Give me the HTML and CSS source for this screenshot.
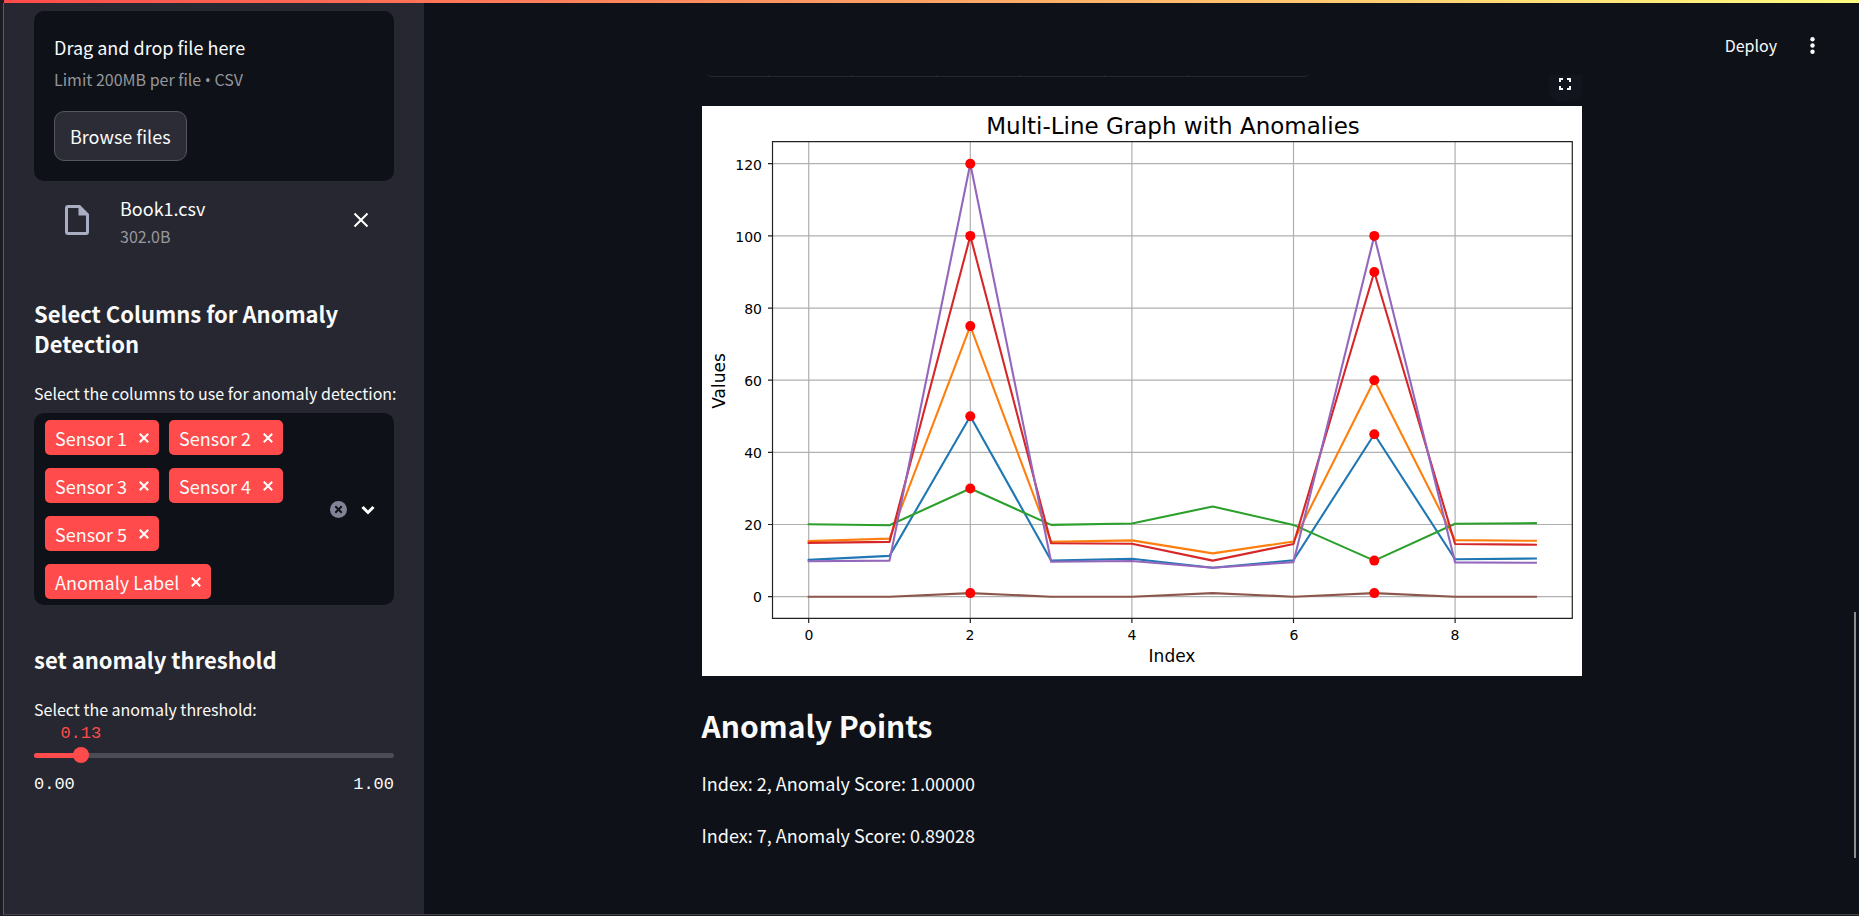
FILE: index.html
```html
<!DOCTYPE html>
<html lang="en">
<head>
<meta charset="utf-8">
<title>Anomaly Detection</title>
<link rel="stylesheet" href="styles.css">
</head>
<body>
<div class="window">
  <div class="decoration"></div>
  <div class="app">
    <aside class="sidebar">
      <section class="dropzone">
        <span class="dropzone-title">Drag and drop file here</span>
        <span class="dropzone-hint">Limit 200MB per file <span class="bullet">•</span> CSV</span>
        <button class="browse" type="button">Browse files</button>
      </section>
      <div class="file">
        <svg class="file-icon" width="24" height="30" viewBox="0 0 24 30" aria-hidden="true"><path fill-rule="evenodd" d="M3 0H15L24 9V27a3 3 0 0 1-3 3H3a3 3 0 0 1-3-3V3a3 3 0 0 1 3-3ZM3 3V27H21V10.500H13.500V3Z"/></svg>
        <div class="file-text">
          <span class="file-name">Book1.csv</span>
          <span class="file-size">302.0B</span>
        </div>
        <button class="icon-button" type="button" aria-label="Remove Book1.csv"><svg width="16" height="16" viewBox="0 0 16 16"><path class="stroke" d="M1.500 1.500 14.500 14.500M14.500 1.500 1.500 14.500"/></svg></button>
      </div>

      <h3 class="side-heading">Select Columns for Anomaly Detection</h3>
      <div class="label" id="columns-label">Select the columns to use for anomaly detection:</div>
      <div class="multiselect" role="group" aria-labelledby="columns-label">
        <div class="tags">
          <span class="tag">Sensor 1<button class="icon-button" type="button" aria-label="Remove Sensor 1"><svg width="10" height="10" viewBox="0 0 10 10"><path class="stroke" d="M.8.8 9.200 9.200M9.200.8.8 9.200"/></svg></button></span>
          <span class="tag">Sensor 2<button class="icon-button" type="button" aria-label="Remove Sensor 2"><svg width="10" height="10" viewBox="0 0 10 10"><path class="stroke" d="M.8.8 9.200 9.200M9.200.8.8 9.200"/></svg></button></span>
          <span class="tag">Sensor 3<button class="icon-button" type="button" aria-label="Remove Sensor 3"><svg width="10" height="10" viewBox="0 0 10 10"><path class="stroke" d="M.8.8 9.200 9.200M9.200.8.8 9.200"/></svg></button></span>
          <span class="tag">Sensor 4<button class="icon-button" type="button" aria-label="Remove Sensor 4"><svg width="10" height="10" viewBox="0 0 10 10"><path class="stroke" d="M.8.8 9.200 9.200M9.200.8.8 9.200"/></svg></button></span>
          <span class="tag">Sensor 5<button class="icon-button" type="button" aria-label="Remove Sensor 5"><svg width="10" height="10" viewBox="0 0 10 10"><path class="stroke" d="M.8.8 9.200 9.200M9.200.8.8 9.200"/></svg></button></span>
          <span class="tag">Anomaly Label<button class="icon-button" type="button" aria-label="Remove Anomaly Label"><svg width="10" height="10" viewBox="0 0 10 10"><path class="stroke" d="M.8.8 9.200 9.200M9.200.8.8 9.200"/></svg></button></span>
        </div>
        <button class="icon-button" type="button" aria-label="Clear all"><svg width="17" height="17" viewBox="0 0 17 17"><circle class="clear-disc" cx="8.500" cy="8.500" r="8.500"/><path class="clear-cross" d="M5.300 5.300 11.700 11.700M11.700 5.300 5.300 11.700"/></svg></button>
        <button class="icon-button" type="button" aria-label="Open options"><svg width="14" height="10" viewBox="0 0 14 10"><path class="chevron" d="M1.500 2 7 7.500 12.500 2"/></svg></button>
      </div>

      <h3 class="side-heading threshold-heading">set anomaly threshold</h3>
      <label class="label" for="threshold">Select the anomaly threshold:</label>
      <div class="slider">
        <output class="slider-value" for="threshold" style="margin-left: 13%">0.13</output>
        <div class="slider-row">
          <div class="rail"><div class="rail-fill" style="width: 13%"></div></div>
          <input class="range" id="threshold" type="range" min="0" max="1" step="0.01" value="0.13">
        </div>
        <div class="slider-ends"><span>0.00</span><span>1.00</span></div>
      </div>
    </aside>

    <div class="page">
      <header class="toolbar">
        <button class="deploy" type="button">Deploy</button>
        <button class="icon-button" type="button" aria-label="Main menu"><svg width="5" height="17" viewBox="0 0 5 17"><g fill="#fafafa"><circle cx="2.500" cy="2.200" r="2.200"/><circle cx="2.500" cy="8.500" r="2.200"/><circle cx="2.500" cy="14.800" r="2.200"/></g></svg></button>
      </header>
      <main class="content">
        <div class="scroll-edge">
          <div class="frame-clip"><div class="frame"><i></i><i></i><i></i><i></i><i></i><i></i><i></i></div></div>
          <button class="fullscreen" type="button" aria-label="View fullscreen"><svg width="12" height="12" viewBox="0 0 12 12"><path d="M1 4V1H4M8 1H11V4M11 8V11H8M4 11H1V8"/></svg></button>
        </div>
        <svg class="chart" viewBox="0 0 880 570" role="img" aria-label="Multi-Line Graph with Anomalies">
          <rect width="880" height="570" fill="#fff"/>
          <path class="grid" d="M106.700 36V512M268.300 36V512M429.900 36V512M591.500 36V512M753.100 36V512M71 490.700H870M71 418.500H870M71 346.400H870M71 274.200H870M71 202.100H870M71 129.900H870M71 57.700H870"/>
          <g class="series">
            <polyline stroke="#1f77b4" points="106.700,453.900 187.500,449.900 268.300,310.300 349.100,454.600 429.900,452.800 510.700,461.800 591.500,454.300 672.300,328.300 753.100,453.200 833.900,452.500"/>
            <polyline stroke="#ff7f0e" points="106.700,435.100 187.500,432.600 268.300,220.100 349.100,435.900 429.900,434.400 510.700,447.400 591.500,435.500 672.300,274.200 753.100,434.100 833.900,434.800"/>
            <polyline stroke="#2ca02c" points="106.700,418.200 187.500,419.300 268.300,382.500 349.100,418.900 429.900,417.500 510.700,400.500 591.500,418.900 672.300,454.600 753.100,417.800 833.900,417.100"/>
            <polyline stroke="#d62728" points="106.700,436.900 187.500,435.900 268.300,129.900 349.100,437.300 429.900,437.700 510.700,454.600 591.500,438 672.300,166 753.100,438 833.900,438.700"/>
            <polyline stroke="#9467bd" points="106.700,455.300 187.500,454.600 268.300,57.700 349.100,455.700 429.900,455 510.700,461.800 591.500,456.100 672.300,129.900 753.100,456.400 833.900,456.800"/>
            <polyline stroke="#8c564b" points="106.700,490.700 187.500,490.700 268.300,487.100 349.100,490.700 429.900,490.700 510.700,487.100 591.500,490.700 672.300,487.100 753.100,490.700 833.900,490.700"/>
          </g>
          <g fill="#f00">
            <circle cx="268.300" cy="57.700" r="5"/><circle cx="268.300" cy="129.900" r="5"/><circle cx="268.300" cy="220.100" r="5"/><circle cx="268.300" cy="310.300" r="5"/><circle cx="268.300" cy="382.500" r="5"/><circle cx="268.300" cy="487.100" r="5"/>
            <circle cx="672.300" cy="129.900" r="5"/><circle cx="672.300" cy="166" r="5"/><circle cx="672.300" cy="274.200" r="5"/><circle cx="672.300" cy="328.300" r="5"/><circle cx="672.300" cy="454.600" r="5"/><circle cx="672.300" cy="487.100" r="5"/>
          </g>
          <path class="axis" d="M70.500 35.700H870.300V512.300H70.500ZM66 490.700H70.500M66 418.500H70.500M66 346.400H70.500M66 274.200H70.500M66 202.100H70.500M66 129.900H70.500M66 57.700H70.500M106.700 512V517M268.300 512V517M429.900 512V517M591.500 512V517M753.100 512V517"/>
          <g class="tick-text" text-anchor="end">
            <text x="60" y="64">120</text><text x="60" y="136">100</text><text x="60" y="208">80</text><text x="60" y="280">60</text><text x="60" y="352">40</text><text x="60" y="424">20</text><text x="60" y="496">0</text>
          </g>
          <g class="tick-text" text-anchor="middle">
            <text x="107" y="534">0</text><text x="268" y="534">2</text><text x="430" y="534">4</text><text x="592" y="534">6</text><text x="753" y="534">8</text>
          </g>
          <text class="axis-title" x="470" y="556">Index</text>
          <text class="axis-title" transform="translate(23 275) rotate(-90)">Values</text>
          <text class="chart-title" x="471" y="28">Multi-Line Graph with Anomalies</text>
        </svg>
        <h1 class="title">Anomaly Points</h1>
        <p class="point">Index: 2, Anomaly Score: 1.00000</p>
        <p class="point">Index: 7, Anomaly Score: 0.89028</p>
      </main>
      <div class="scrollbar"></div>
    </div>
  </div>
</div>
</body>
</html>
```
FILE: styles.css
```css
* { box-sizing: border-box; }

body {
  margin: 0;
  background: #1c1c22;
  color: #fafafa;
  font: 18px/32px "Noto Sans CJK SC", "Open Sans", sans-serif;
}

button {
  font: inherit;
  color: inherit;
  padding: 0;
  border: 0;
  background: none;
}

.window {
  display: flex;
  flex-direction: column;
  min-height: 100vh;
  padding-left: 3px;
  border-bottom: 1px solid #1c1c22;
}

.decoration {
  height: 3px;
  margin-left: 1px;
  background: linear-gradient(90deg, #ff4b4b, #fffd80);
}

.app {
  display: flex;
  flex: 1;
  border-left: 1px solid #5c5c62;
  border-bottom: 1px solid #444448;
}

.sidebar {
  flex: none;
  width: 420px;
  padding: 8px 30px;
  background: #262730;
}

.dropzone {
  display: flex;
  flex-direction: column;
  align-items: flex-start;
  padding: 20px;
  border-radius: 10px;
  background: #0e1117;
}

.dropzone-hint {
  color: #95969a;
  font-size: 16px;
}

.bullet { font-family: "Open Sans", sans-serif; }

.browse {
  height: 50px;
  margin-top: 15px;
  padding: 0 15px;
  border: 1px solid #55565d;
  border-radius: 10px;
  background: #2b2c36;
}

.icon-button {
  display: flex;
  flex: none;
}

.stroke {
  fill: none;
  stroke: #fff;
  stroke-width: 2;
}

.file {
  display: flex;
  align-items: center;
  margin-top: 13px;
  padding: 0 25px 0 31px;
}

.file svg { margin-bottom: 4px; }

.file-icon { fill: #a9aec4; }

.file-text {
  display: flex;
  flex: 1;
  flex-direction: column;
  margin-left: 31px;
  line-height: 28px;
}

.file-size {
  color: #98989d;
  font-size: 16px;
}

.side-heading {
  margin: 48px 0 23px;
  font-size: 22px;
  line-height: 30px;
}

.threshold-heading { margin-top: 39px; }

.label {
  display: block;
  font-size: 16px;
  line-height: 24px;
  white-space: nowrap;
}

.multiselect {
  display: flex;
  align-items: center;
  gap: 14px;
  margin-top: 8px;
  padding: 7px 19px 6px 11px;
  border-radius: 10px;
  background: #0e1117;
}

.tags {
  display: flex;
  flex: 1;
  flex-wrap: wrap;
  gap: 13px 10px;
}

.tag {
  display: flex;
  align-items: center;
  gap: 12px;
  height: 35px;
  padding: 0 10px;
  border-radius: 5px;
  background: #ff4b4b;
}

.clear-disc { fill: #808495; }

.clear-cross {
  stroke: #0e1117;
  stroke-width: 2;
}

.chevron {
  fill: none;
  stroke: #fff;
  stroke-width: 3;
}

.slider {
  font-family: "Liberation Mono", monospace;
  font-size: 17px;
}

.slider-value {
  display: block;
  width: max-content;
  color: #ff4b4b;
  line-height: 26px;
  transform: translateX(-50%);
}

.slider-row {
  display: grid;
  align-items: center;
}

.rail,
.range { grid-area: 1 / 1; }

.rail {
  height: 5px;
  border-radius: 3px;
  background: #4b4c55;
  overflow: hidden;
}

.rail-fill {
  height: 100%;
  background: #ff4b4b;
}

.range {
  height: 16px;
  margin: 0 -8px;
  appearance: none;
  background: none;
}

.range::-webkit-slider-thumb {
  appearance: none;
  width: 16px;
  height: 16px;
  border-radius: 50%;
  background: #ff4b4b;
}

.slider-ends {
  display: flex;
  justify-content: space-between;
  margin-top: 10px;
  line-height: 24px;
}

.page {
  position: relative;
  flex: 1;
  background: #0e1117;
}

.toolbar {
  display: flex;
  align-items: center;
  justify-content: flex-end;
  gap: 33px;
  height: 72px;
  padding: 12px 44px 0 0;
  font-size: 16px;
}

.content {
  max-width: 880px;
  margin: 0 auto;
}

.scroll-edge {
  display: flex;
  align-items: flex-start;
  justify-content: space-between;
  height: 31px;
}

.frame-clip {
  display: flex;
  align-items: flex-end;
  width: 612px;
  height: 2px;
  overflow: hidden;
}

.frame {
  display: grid;
  flex: 1;
  grid-template-columns: 65px repeat(5, 84px) 1fr;
  height: 24px;
  border: 1px solid #26292f;
  border-radius: 10px;
}

.frame i + i { border-left: 1px solid #26292f; }

.fullscreen {
  display: flex;
  justify-content: center;
  width: 33px;
  height: 26px;
  padding-top: 3px;
  border-radius: 0 0 10px 10px;
  background: #12151d;
}

.fullscreen path {
  fill: none;
  stroke: #fafafa;
  stroke-width: 2;
}

.chart {
  display: block;
  width: 100%;
  font-family: "DejaVu Sans", sans-serif;
}

.grid {
  stroke: #b0b0b0;
  stroke-width: 1.2;
}

.series {
  fill: none;
  stroke-width: 2.1;
  stroke-linejoin: round;
  stroke-linecap: square;
}

.axis {
  fill: none;
  stroke: #222;
  stroke-width: 1.2;
}

.tick-text { font-size: 14px; }

.axis-title {
  font-size: 17px;
  text-anchor: middle;
}

.chart-title {
  font-size: 23px;
  text-anchor: middle;
}

.title {
  margin: 25px 0 18px;
  font-size: 30px;
  line-height: 48px;
}

.point { margin: 0 0 20px; }

.scrollbar {
  position: absolute;
  right: 3px;
  bottom: 56px;
  width: 2px;
  height: 27%;
  background: #8f8f8f;
}
```
